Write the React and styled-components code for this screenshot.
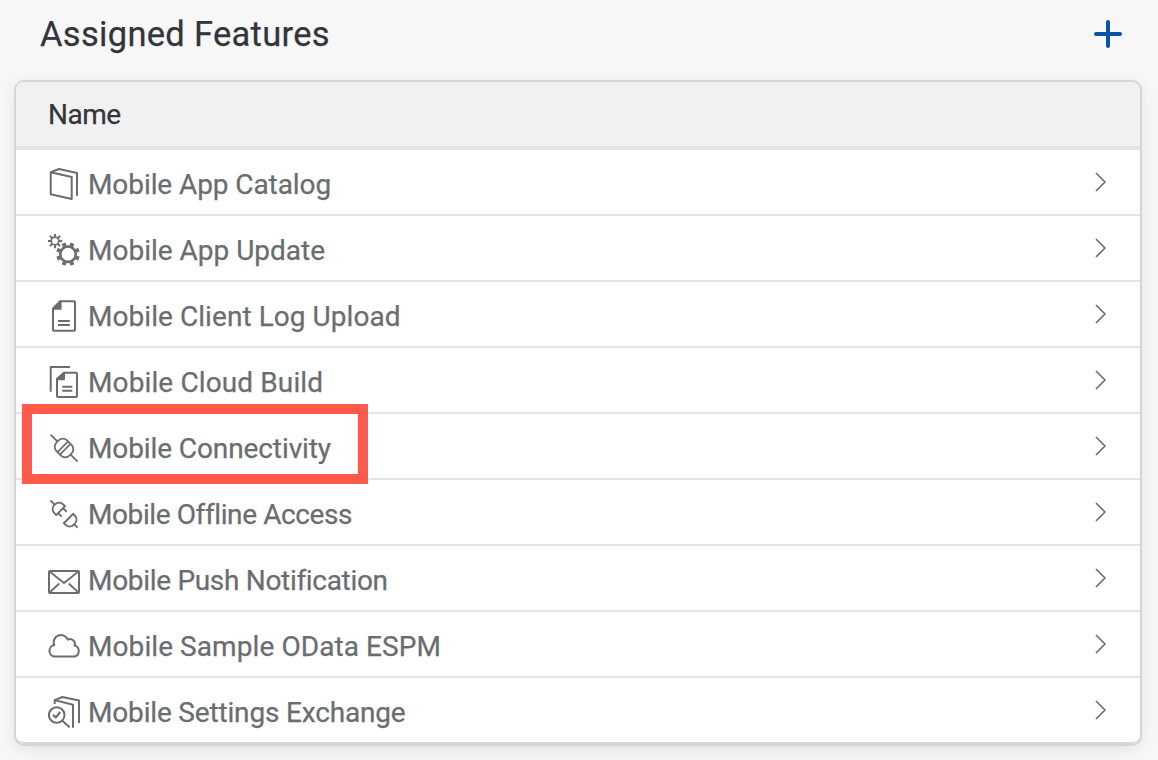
import React from "react";
import styled, { createGlobalStyle } from "styled-components";

const GlobalStyle = createGlobalStyle`
  * { box-sizing: border-box; }
  body {
    margin: 0;
    background: #f7f7f7;
    font-family: Roboto, "Open Sans", sans-serif;
    -webkit-text-stroke: 0.25px currentColor;
    overflow: hidden;
  }
`;

const Page = styled.main`
  width: 1158px;
  height: 760px;
  padding: 0 16px 0 14px;
  display: flex;
  flex-direction: column;
  background: #f7f7f7;
`;

const Toolbar = styled.header`
  height: 80px;
  padding: 0 20px 12px 26px;
  display: flex;
  align-items: center;
  justify-content: space-between;
`;

const Title = styled.h1`
  margin: 0;
  font-size: 34.5px;
  line-height: 44px;
  font-weight: 400;
  color: #32363a;
  white-space: nowrap;
  letter-spacing: 0.3px;
`;

const AddButton = styled.button`
  display: flex;
  padding: 0;
  border: 0;
  background: none;
  color: #0854a0;
  cursor: pointer;
`;

const Card = styled.section`
  border: 2px solid #d5d5d5;
  border-radius: 10px;
  background: #fff;
  box-shadow: 0 4px 16px rgba(0, 0, 0, 0.08);
`;

const ColumnHeader = styled.div`
  height: 68px;
  padding: 0 32px;
  display: flex;
  align-items: center;
  background: #f1f1f1;
  border-bottom: 4px solid #e4e4e4;
  border-radius: 8px 8px 0 0;
  font-size: 28px;
  color: #32363a;
  letter-spacing: -0.5px;
`;

const Row = styled.div`
  position: relative;
  height: 66px;
  padding: 0 32px;
  display: flex;
  align-items: center;
  justify-content: space-between;
  border-bottom: 2px solid #e4e4e4;
  color: #6a6d70;

  &:last-child {
    border-bottom-color: #d9d9d9;
    border-radius: 0 0 8px 8px;
  }
`;

const Feature = styled.div`
  display: flex;
  align-items: center;
  gap: 8px;
  padding-top: 4px;
`;

const Label = styled.span`
  padding-top: 2px;
  font-size: 28px;
  line-height: 36px;
  white-space: nowrap;
  letter-spacing: ${(p) => p.$spacing || 0}px;
`;

const Highlight = styled.div`
  position: absolute;
  left: 6px;
  top: -10px;
  width: 346px;
  height: 80px;
  border: 10px solid #ff594c;
  z-index: 1;
`;

const Glyph = styled.svg`
  display: block;
  flex: none;
  fill: none;
  stroke: currentColor;
  stroke-width: 2;
  stroke-linejoin: round;
`;

const teeth = (cx, cy, r1, r2, offset) =>
  Array.from({ length: 8 }, (_, i) => {
    const a = ((i * 45 + offset) * Math.PI) / 180;
    return `M${cx + r1 * Math.cos(a)} ${cy + r1 * Math.sin(a)}L${cx + r2 * Math.cos(a)} ${cy + r2 * Math.sin(a)}`;
  }).join("");

const icons = {
  catalog: (
    <path d="M2.7 4.3 23.7 9V31L2.7 26.3ZM2.7 4.3 11 1 29 5V27.7" />
  ),
  gears: (
    <>
      <circle cx="7" cy="7" r="3.8" strokeWidth="1.8" />
      <path d={teeth(7, 7, 4.2, 7.2, 0)} strokeWidth="2" />
      <circle cx="20" cy="20.2" r="7.7" strokeWidth="2.6" />
      <path d={teeth(20, 20.2, 8.3, 11.8, 22.5)} strokeWidth="4" />
    </>
  ),
  document: (
    <>
      <path d="M12.3 1.3H26Q27 1.3 27 2.3V29.7Q27 30.7 26 30.7H6Q5 30.7 5 29.7V8.8Z" />
      <path d="M12.6 1.3V8.8H5Z" fill="currentColor" />
      <path d="M10 21H21.8M10 25H21.8" />
    </>
  ),
  copies: (
    <>
      <path d="M2.7 25.7V1H22" />
      <path d="M16 6.8H28Q29 6.8 29 7.8V30Q29 31 28 31H10Q9 31 9 30V13.3Z" />
      <path d="M16 6.8V13.3H9Z" fill="currentColor" />
      <path d="M14.3 20.7H24.3M14.3 24.7H24.3" />
    </>
  ),
  connected: (
    <g transform="translate(16 16) rotate(45)" strokeWidth="1.8">
      <rect x="-9.2" y="-7.5" width="18.4" height="15" rx="6" />
      <path d="M-1.8-7.2V7.2M1.8-7.2V7.2" strokeWidth="1.6" />
      <path d="M-19 0H-9.4M9.4 0H19.3" />
    </g>
  ),
  disconnected: (
    <g transform="translate(16 16) rotate(45)" strokeWidth="1.9">
      <path d="M-4.8-7V7M-4.8-6.2H-7C-10.8-6.2-13.3-3.7-13.3 0S-10.8 6.2-7 6.2H-4.8M-19.3 0H-13.3M-4.8-3.5H.3M-4.8 3.5H.3" />
      <path d="M6.4-7.4V7.4M6.4-6.6H8.4C12.2-6.6 14.6-3.8 14.6 0S12.2 6.6 8.4 6.6H6.4M14.6 0H19.3" />
    </g>
  ),
  mail: (
    <>
      <rect x="1" y="7" width="30" height="22" rx="1" />
      <path d="M1.3 7.3 16 19 30.7 7.3M1.5 28.5 11.3 19.5M30.5 28.5 20.7 19.5" strokeWidth="1.8" />
    </>
  ),
  cloud: (
    <path d="M7 26.6A5.8 5.8 0 0 1 6.2 15.1A7.3 7.3 0 0 1 19.8 9.6A4.9 4.9 0 0 1 26.6 15.6A5.6 5.6 0 0 1 25.5 26.6Z" />
  ),
  inspect: (
    <>
      <circle cx="8.7" cy="19" r="7.8" />
      <path d="M5 18.7 7.8 21.5 12.3 16M14.3 24.7 21.7 31.3M6.7 8V4.1L25 8.7V31.7M6.7 4.1 14.3 1 31 4.6V27" />
    </>
  ),
};

const features = [
  { name: "Mobile App Catalog", icon: "catalog", spacing: -0.08 },
  { name: "Mobile App Update", icon: "gears", spacing: 0 },
  { name: "Mobile Client Log Upload", icon: "document", spacing: 0.06 },
  { name: "Mobile Cloud Build", icon: "copies", spacing: 0.12 },
  { name: "Mobile Connectivity", icon: "connected", spacing: -0.1, highlighted: true },
  { name: "Mobile Offline Access", icon: "disconnected", spacing: -0.4 },
  { name: "Mobile Push Notification", icon: "mail", spacing: -0.31 },
  { name: "Mobile Sample OData ESPM", icon: "cloud", spacing: 0.08 },
  { name: "Mobile Settings Exchange", icon: "inspect", spacing: -0.17 },
];

export default function App() {
  return (
    <>
      <GlobalStyle />
      <Page>
        <Toolbar>
          <Title>Assigned Features</Title>
          <AddButton aria-label="Add">
            <Glyph width="28" height="28" viewBox="0 0 28 28">
              <path d="M14 2V26M2 14H26" strokeWidth="4" strokeLinecap="round" />
            </Glyph>
          </AddButton>
        </Toolbar>
        <Card>
          <ColumnHeader>Name</ColumnHeader>
          {features.map((f) => (
            <Row key={f.name}>
              {f.highlighted && <Highlight />}
              <Feature>
                <Glyph width="32" height="32" viewBox="0 0 32 32">
                  {icons[f.icon]}
                </Glyph>
                <Label $spacing={f.spacing}>{f.name}</Label>
              </Feature>
              <Glyph width="16" height="22" viewBox="0 0 16 22">
                <path d="M4 2 13 11 4 20" strokeWidth="1.6" />
              </Glyph>
            </Row>
          ))}
        </Card>
      </Page>
    </>
  );
}
